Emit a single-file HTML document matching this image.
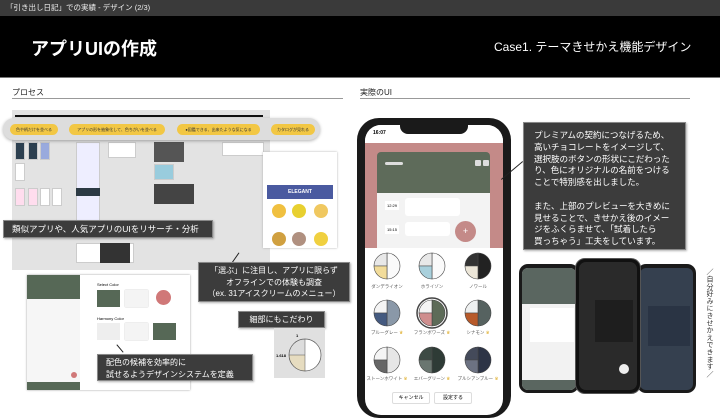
<!DOCTYPE html>
<html><head><meta charset="utf-8"><style>
*{margin:0;padding:0;box-sizing:border-box}
body{width:720px;height:405px;overflow:hidden;background:#fff;font-family:"Liberation Sans","Noto Sans CJK JP",sans-serif;position:relative}
.a{position:absolute}
.lbl{background:#3c3c3c;color:#fff;border:1px solid #888;box-shadow:1px 1px 2px rgba(0,0,0,.3)}
.pill{position:absolute;top:124px;height:11px;background:#f2c744;border-radius:6px;font-size:4px;color:#333;line-height:11px;text-align:center}
.th{position:absolute;background:#fff;border:1px solid #ccc}
.dk{position:absolute;background:#2c3a44}
.cl{position:absolute;font-size:4.5px;color:#555;width:60px;text-align:center}
</style></head><body>
<div class="a" style="left:0;top:0;width:720px;height:16px;background:#3a3a3a;color:#eee;font-size:7.5px;line-height:16px;padding-left:6px">「引き出し日記」での実績 - デザイン (2/3)</div>
<div class="a" style="left:0;top:16px;width:720px;height:61px;background:#000"></div>
<div class="a" style="left:31px;top:35px;color:#fff;font-size:18px;font-weight:bold">アプリUIの作成</div>
<div class="a" style="left:494px;top:38px;color:#fff;font-size:12px">Case1. テーマきせかえ機能デザイン</div>
<div class="a" style="left:0;top:77px;width:720px;height:1px;background:#777"></div>

<div class="a" style="left:12px;top:87px;font-size:8px;color:#222">プロセス</div>
<div class="a" style="left:12px;top:98px;width:331px;height:1px;background:#999"></div>
<div class="a" style="left:360px;top:87px;font-size:8px;color:#222">実際のUI</div>
<div class="a" style="left:360px;top:98px;width:330px;height:1px;background:#999"></div>

<!-- research area -->
<div class="a" style="left:12px;top:110px;width:258px;height:160px;background:#e3e3e3"></div>
<div class="a" style="left:15px;top:115px;width:248px;height:2px;background:#111"></div>
<div class="th" style="left:15px;top:142px;width:10px;height:18px;background:#2d4050"></div>
<div class="th" style="left:28px;top:142px;width:10px;height:18px;background:#2d4050"></div>
<div class="th" style="left:40px;top:142px;width:10px;height:18px;background:#9ad"></div>
<div class="th" style="left:15px;top:163px;width:10px;height:18px"></div>
<div class="th" style="left:15px;top:188px;width:10px;height:18px;background:#fde"></div>
<div class="th" style="left:28px;top:188px;width:10px;height:18px;background:#fde"></div>
<div class="th" style="left:40px;top:188px;width:10px;height:18px"></div>
<div class="th" style="left:52px;top:188px;width:10px;height:18px"></div>
<div class="th" style="left:76px;top:142px;width:24px;height:80px;background:#eef"></div>
<div class="dk" style="left:76px;top:188px;width:24px;height:8px"></div>
<div class="th" style="left:108px;top:142px;width:28px;height:16px"></div>
<div class="dk" style="left:154px;top:142px;width:30px;height:20px;background:#555"></div>
<div class="th" style="left:154px;top:164px;width:20px;height:16px;background:#9cd"></div>
<div class="dk" style="left:154px;top:184px;width:40px;height:20px;background:#444"></div>
<div class="th" style="left:222px;top:142px;width:42px;height:14px"></div>
<div class="th" style="left:76px;top:243px;width:58px;height:20px"></div>
<div class="dk" style="left:100px;top:243px;width:30px;height:20px;background:#333"></div>
<div class="a" style="left:3px;top:118px;width:317px;height:22px;background:#ddd;border-radius:11px;box-shadow:0 1px 3px rgba(0,0,0,.3)"></div>
<div class="pill" style="left:10px;width:48px">色や柄だけを並べる</div>
<div class="pill" style="left:69px;width:96px">アプリの形を抽象化して、色ちがいを並べる</div>
<div class="pill" style="left:177px;width:83px">●図鑑できる、出来たような気になる</div>
<div class="pill" style="left:271px;width:44px">カタログが見れる</div>
<!-- icecream card -->
<div class="a" style="left:263px;top:152px;width:74px;height:96px;background:#fff;box-shadow:0 0 2px #aaa"></div>
<div class="a" style="left:267px;top:185px;width:66px;height:14px;background:#4a5aa0;color:#fff;font-size:5px;text-align:center;line-height:14px;font-weight:bold">ELEGANT</div>
<div class="a" style="left:272px;top:204px;width:14px;height:14px;border-radius:50%;background:#f0c040"></div>
<div class="a" style="left:292px;top:204px;width:14px;height:14px;border-radius:50%;background:#e8d030"></div>
<div class="a" style="left:314px;top:204px;width:14px;height:14px;border-radius:50%;background:#f0c860"></div>
<div class="a" style="left:272px;top:232px;width:14px;height:14px;border-radius:50%;background:#d0a040"></div>
<div class="a" style="left:292px;top:232px;width:14px;height:14px;border-radius:50%;background:#b09080"></div>
<div class="a" style="left:314px;top:232px;width:14px;height:14px;border-radius:50%;background:#f0d040"></div>
<div class="a" style="left:118px;top:228px;width:12px;height:1px;background:#222;transform:rotate(55deg)"></div>
<div class="a lbl" style="left:3px;top:220px;width:210px;height:18px;font-size:8.5px;line-height:17px;padding-left:8px">類似アプリや、人気アプリのUIをリサーチ・分析</div>

<!-- design system card -->
<div class="a" style="left:27px;top:275px;width:163px;height:115px;background:#fff;box-shadow:0 0 2px #999"></div>
<div class="a" style="left:27px;top:275px;width:53px;height:115px;background:#f6f6f6"></div>
<div class="a" style="left:27px;top:275px;width:53px;height:24px;background:#566856"></div>
<div class="a" style="left:27px;top:382px;width:53px;height:8px;background:#566856"></div>
<div class="a" style="left:71px;top:372px;width:6px;height:6px;border-radius:50%;background:#d07878"></div>
<div class="a" style="left:97px;top:282px;font-size:4px">Select Color</div>
<div class="a" style="left:97px;top:290px;width:23px;height:17px;background:#566856"></div>
<div class="a" style="left:125px;top:290px;width:23px;height:17px;background:#f4f4f4;box-shadow:0 0 1px #aaa"></div>
<div class="a" style="left:156px;top:290px;width:15px;height:15px;border-radius:50%;background:#d07878"></div>
<div class="a" style="left:97px;top:316px;font-size:4px">Harmony Color</div>
<div class="a" style="left:97px;top:323px;width:23px;height:17px;background:#eee"></div>
<div class="a" style="left:125px;top:323px;width:23px;height:17px;background:#f4f4f4;box-shadow:0 0 1px #aaa"></div>
<div class="a" style="left:153px;top:323px;width:23px;height:17px;background:#566856"></div>
<div class="a" style="left:115px;top:348px;width:10px;height:1px;background:#222;transform:rotate(50deg)"></div>
<div class="a lbl" style="left:97px;top:354px;width:156px;height:27px;font-size:8px;line-height:11.5px;padding:2px 8px">配色の候補を効率的に<br>試せるようデザインシステムを定義</div>

<div class="a" style="left:228px;top:258px;width:14px;height:1px;background:#222;transform:rotate(-55deg)"></div>
<div class="a lbl" style="left:198px;top:262px;width:152px;height:40px;font-size:8px;line-height:11.5px;padding:2px 6px;text-align:center">「選ぶ」に注目し、アプリに限らず<br>オフラインでの体験も調査<br>（ex. 31アイスクリームのメニュー）</div>
<div class="a lbl" style="left:238px;top:311px;width:87px;height:17px;font-size:8px;line-height:15px;text-align:center">細部にもこだわり</div>
<div class="a" style="left:274px;top:328px;width:51px;height:50px;background:#e0e0e0"></div>
<div class="a" style="left:296px;top:333px;font-size:4px;font-weight:bold">1</div>
<div class="a" style="left:276px;top:353px;font-size:4px;font-weight:bold">1.618</div>
<svg class="a" style="left:288px;top:338px" width="34" height="34" viewBox="0 0 34 34"><path d="M17 17V1A16 16 0 0 1 17 33Z" fill="#fff"/><path d="M17 17V1A16 16 0 0 0 1 17Z" fill="#ddd"/><path d="M17 17H1A16 16 0 0 0 17 33Z" fill="#e6dcc0"/><circle cx="17" cy="17" r="16" fill="none" stroke="#555" stroke-width=".7"/><path d="M17 1V33M1 17H17" stroke="#555" stroke-width=".5"/></svg>

<!-- main phone -->
<div class="a" style="left:357px;top:118px;width:154px;height:300px;background:#1a1a1a;border-radius:22px"></div>
<div class="a" style="left:365px;top:125px;width:138px;height:290px;background:#fff;border-radius:16px;overflow:hidden">
 <div class="a" style="left:0;top:0;width:138px;height:18px;background:#fff"></div>
 <div class="a" style="left:8px;top:5px;font-size:5px;font-weight:bold">16:07</div>
 <div class="a" style="left:35px;top:0;width:68px;height:9px;background:#1a1a1a;border-radius:0 0 8px 8px"></div>
 <div class="a" style="left:0;top:18px;width:138px;height:105px;background:#c48a88"></div>
 <div class="a" style="left:12px;top:27px;width:113px;height:41px;background:#5e6b5a;border-radius:4px 4px 0 0"></div>
 <div class="a" style="left:20px;top:37px;width:18px;height:3px;background:#ddd;border-radius:2px"></div>
 <div class="a" style="left:110px;top:35px;width:6px;height:6px;background:#ddd;border-radius:1px"></div>
 <div class="a" style="left:118px;top:35px;width:6px;height:6px;background:#ddd;border-radius:1px"></div>
 <div class="a" style="left:12px;top:68px;width:113px;height:55px;background:#f3f3f3"></div>
 <div class="a" style="left:20px;top:76px;font-size:4px;background:#fff;padding:2px">12:29</div>
 <div class="a" style="left:40px;top:73px;width:55px;height:18px;background:#fff;border-radius:3px"></div>
 <div class="a" style="left:20px;top:100px;font-size:4px;background:#fff;padding:2px">15:15</div>
 <div class="a" style="left:40px;top:97px;width:45px;height:14px;background:#fff;border-radius:3px"></div>
 <div class="a" style="left:90px;top:96px;width:21px;height:21px;border-radius:50%;background:#c48a88;color:#fff;font-size:9px;text-align:center;line-height:21px">+</div>
</div>
<svg class="a" style="left:365px;top:250px" width="138" height="140">
 <g stroke="#444" stroke-width=".6">
 <g transform="translate(22,16)"><path d="M0 0V-13A13 13 0 0 1 0 13Z" fill="#fafafa"/><path d="M0 0V-13A13 13 0 0 0 -13 0Z" fill="#e8e8e8"/><path d="M0 0H-13A13 13 0 0 0 0 13Z" fill="#f2dc9a"/></g>
 <g transform="translate(67,16)"><path d="M0 0V-13A13 13 0 0 1 0 13Z" fill="#fafafa"/><path d="M0 0V-13A13 13 0 0 0 -13 0Z" fill="#e8e8e8"/><path d="M0 0H-13A13 13 0 0 0 0 13Z" fill="#a9d0dc"/></g>
 <g transform="translate(113,16)"><path d="M0 0V-13A13 13 0 0 1 0 13Z" fill="#222"/><path d="M0 0V-13A13 13 0 0 0 -13 0Z" fill="#333"/><path d="M0 0H-13A13 13 0 0 0 0 13Z" fill="#ece6d8"/></g>
 <g transform="translate(22,63)"><path d="M0 0V-13A13 13 0 0 1 0 13Z" fill="#8a98a8"/><path d="M0 0V-13A13 13 0 0 0 -13 0Z" fill="#f4f4f4"/><path d="M0 0H-13A13 13 0 0 0 0 13Z" fill="#445a80"/></g>
 <g transform="translate(67,63)"><circle r="15" fill="none" stroke-width="1.5"/><path d="M0 0V-13A13 13 0 0 1 0 13Z" fill="#5d6b58"/><path d="M0 0V-13A13 13 0 0 0 -13 0Z" fill="#f4f4f4"/><path d="M0 0H-13A13 13 0 0 0 0 13Z" fill="#cf8e8e"/></g>
 <g transform="translate(113,63)"><path d="M0 0V-13A13 13 0 0 1 0 13Z" fill="#566260"/><path d="M0 0V-13A13 13 0 0 0 -13 0Z" fill="#eef0f0"/><path d="M0 0H-13A13 13 0 0 0 0 13Z" fill="#b85a2a"/></g>
 <g transform="translate(22,110)"><path d="M0 0V-13A13 13 0 0 1 0 13Z" fill="#e6e6e6"/><path d="M0 0V-13A13 13 0 0 0 -13 0Z" fill="#f4f4f4"/><path d="M0 0H-13A13 13 0 0 0 0 13Z" fill="#666"/></g>
 <g transform="translate(67,110)"><path d="M0 0V-13A13 13 0 0 1 0 13Z" fill="#2e3b36"/><path d="M0 0V-13A13 13 0 0 0 -13 0Z" fill="#3d4a44"/><path d="M0 0H-13A13 13 0 0 0 0 13Z" fill="#6a7670"/></g>
 <g transform="translate(113,110)"><path d="M0 0V-13A13 13 0 0 1 0 13Z" fill="#2d3446"/><path d="M0 0V-13A13 13 0 0 0 -13 0Z" fill="#444a5a"/><path d="M0 0H-13A13 13 0 0 0 0 13Z" fill="#6c7282"/></g>
 </g>
</svg>
<div class="cl" style="left:357px;top:284px">ダンデライオン</div>
<div class="cl" style="left:402px;top:284px">ホライゾン</div>
<div class="cl" style="left:448px;top:284px">ノワール</div>
<div class="cl" style="left:357px;top:330px">ブルーグレー <span style="color:#e0b030">♛</span></div>
<div class="cl" style="left:402px;top:330px">フランボワーズ <span style="color:#e0b030">♛</span></div>
<div class="cl" style="left:448px;top:330px">シナモン <span style="color:#e0b030">♛</span></div>
<div class="cl" style="left:357px;top:376px">ストーンホワイト <span style="color:#e0b030">♛</span></div>
<div class="cl" style="left:402px;top:376px">エバーグリーン <span style="color:#e0b030">♛</span></div>
<div class="cl" style="left:448px;top:376px">プルシアンブルー <span style="color:#e0b030">♛</span></div>
<div class="a" style="left:392px;top:392px;width:38px;height:12px;border:1px solid #ddd;border-radius:2px;font-size:5px;text-align:center;line-height:10px">キャンセル</div>
<div class="a" style="left:434px;top:392px;width:38px;height:12px;border:1px solid #ddd;border-radius:2px;font-size:5px;text-align:center;line-height:10px">設定する</div>

<!-- text box -->
<div class="a" style="left:498px;top:170px;width:28px;height:1px;background:#222;transform:rotate(-40deg)"></div>
<div class="a lbl" style="left:523px;top:122px;width:163px;height:128px;font-size:8.6px;line-height:11.8px;padding:7px 4px 0 10px;white-space:nowrap;letter-spacing:-0.1px">プレミアムの契約につなげるため、<br>高いチョコレートをイメージして、<br>選択肢のボタンの形状にこだわった<br>り、色にオリジナルの名前をつける<br>ことで特別感を出しました。<br><br>また、上部のプレビューを大きめに<br>見せることで、きせかえ後のイメー<br>ジをふくらませて、「試着したら<br>買っちゃう」工夫をしています。</div>

<!-- small phones -->
<div class="a" style="left:519px;top:264px;width:60px;height:129px;background:#1a1a1a;border-radius:9px"></div>
<div class="a" style="left:522px;top:268px;width:54px;height:122px;background:#f2f2f2;border-radius:6px;overflow:hidden"><div style="height:36px;background:#5a6660"></div><div style="margin:4px 0 0 8px;width:44px;height:34px;background:#fff"></div><div style="position:absolute;bottom:0;width:54px;height:10px;background:#5a6660"></div></div>
<div class="a" style="left:637px;top:264px;width:59px;height:129px;background:#1a1a1a;border-radius:9px"></div>
<div class="a" style="left:640px;top:268px;width:53px;height:122px;background:#35404f;border-radius:6px;overflow:hidden"><div style="margin:38px 0 0 8px;width:42px;height:40px;background:#2a3444"></div></div>
<div class="a" style="left:575px;top:258px;width:66px;height:136px;background:#111;border-radius:10px;border:1px solid #555"></div>
<div class="a" style="left:579px;top:262px;width:58px;height:128px;background:#2a2a2a;border-radius:7px;overflow:hidden"><div style="margin:38px 0 0 16px;width:38px;height:42px;background:#1e1e1e"></div><div style="position:absolute;left:40px;top:102px;width:10px;height:10px;border-radius:50%;background:#eee"></div></div>
<div class="a" style="left:701px;top:268px;width:12px;height:118px;font-size:7px;line-height:8px;writing-mode:vertical-rl;color:#333;letter-spacing:0.3px">／自分好みにきせかえできます／</div>
</body></html>
